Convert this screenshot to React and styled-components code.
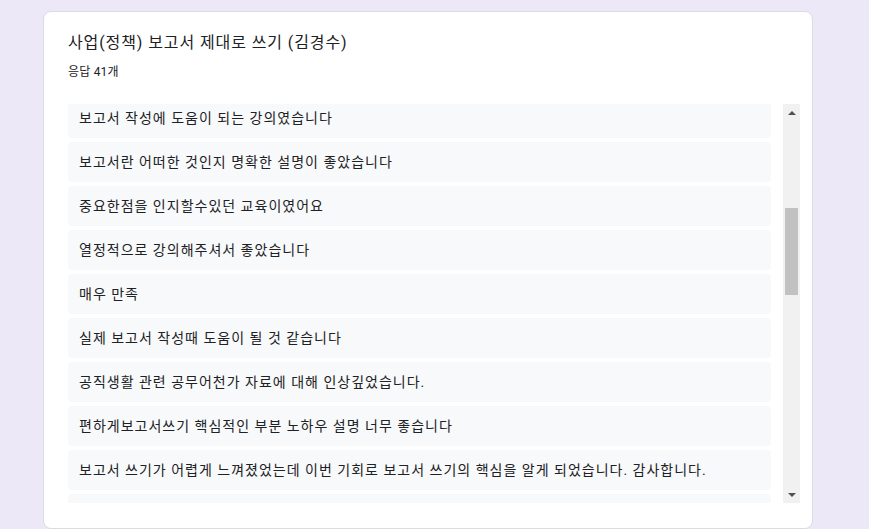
import styled, { createGlobalStyle } from 'styled-components';

const responses = [
    '보고서 작성에 도움이 되는 강의였습니다',
    '보고서란 어떠한 것인지 명확한 설명이 좋았습니다',
    '중요한점을 인지할수있던 교육이였어요',
    '열정적으로 강의해주셔서 좋았습니다',
    '매우 만족',
    '실제 보고서 작성때 도움이 될 것 같습니다',
    '공직생활 관련 공무어천가 자료에 대해 인상깊었습니다.',
    '편하게보고서쓰기 핵심적인 부분 노하우 설명 너무 좋습니다',
    '보고서 쓰기가 어렵게 느껴졌었는데 이번 기회로 보고서 쓰기의 핵심을 알게 되었습니다. 감사합니다.',
    '',
];

const GlobalStyle = createGlobalStyle`
    html, body {
        margin: 0;
        height: 100%;
        background: #ede8f7;
    }
    body {
        font-family: Roboto, "Noto Sans CJK KR", "Noto Sans", sans-serif;
        color: #202124;
        overflow: hidden;
    }
`;

const App = () => {
    return (
        <>
            <GlobalStyle />
            <Page>
                <Card>
                    <Title>사업(정책) 보고서 제대로 쓰기 (김경수)</Title>
                    <Count>응답 41개</Count>
                    <ListArea>
                        <List>
                            {responses.map((text, i) => (
                                <Response key={i} $first={i === 0}>{text}</Response>
                            ))}
                        </List>
                        <ScrollTrack>
                            <ArrowButton><Arrow $dir="up" /></ArrowButton>
                            <Thumb $offset={87} $size={87} />
                            <TrackFill />
                            <ArrowButton><Arrow $dir="down" /></ArrowButton>
                        </ScrollTrack>
                    </ListArea>
                </Card>
            </Page>
        </>
    );
}

const Page = styled.div`
    padding: 11px 0 0 43px;
`;

const Card = styled.div`
    box-sizing: border-box;
    width: 770px;
    height: 518px;
    background: #fff;
    border: 1px solid #dadce0;
    border-radius: 8px;
    padding: 19px 12px 24px 24px;
    display: flex;
    flex-direction: column;
`;

const Title = styled.div`
    font-size: 16px;
    line-height: 24px;
    letter-spacing: 0.9px;
    color: #202124;
`;

const Count = styled.div`
    margin-top: 9px;
    font-size: 12px;
    line-height: 16px;
    letter-spacing: 0.2px;
    color: #202124;
`;

const ListArea = styled.div`
    margin-top: 24px;
    height: 399px;
    display: flex;
`;

const List = styled.div`
    flex: 1;
    overflow: hidden;
    display: flex;
    flex-direction: column;
    gap: 4px;
    padding-right: 12px;
`;

const Response = styled.div`
    flex-shrink: 0;
    box-sizing: border-box;
    height: 40px;
    margin-top: ${(p) => (p.$first ? '-6px' : '0')};
    padding: 10px 11px;
    background: #f8f9fa;
    border-radius: 4px;
    font-size: 14px;
    line-height: 20px;
    letter-spacing: 1px;
    color: #202124;
    white-space: nowrap;
`;

const ScrollTrack = styled.div`
    width: 17px;
    flex-shrink: 0;
    background: #f1f1f1;
    display: flex;
    flex-direction: column;
`;

const ArrowButton = styled.div`
    height: 17px;
    flex-shrink: 0;
    display: flex;
    align-items: center;
    justify-content: center;
`;

const Arrow = styled.div`
    width: 0;
    height: 0;
    border-left: 4px solid transparent;
    border-right: 4px solid transparent;
    ${(p) => (p.$dir === 'up'
        ? 'border-bottom: 4px solid #505050;'
        : 'border-top: 4px solid #505050;')}
`;

const Thumb = styled.div`
    margin: ${(p) => p.$offset}px 2px 0;
    height: ${(p) => p.$size}px;
    background: #c1c1c1;
    flex-shrink: 0;
`;

const TrackFill = styled.div`
    flex: 1;
`;

export default App;
